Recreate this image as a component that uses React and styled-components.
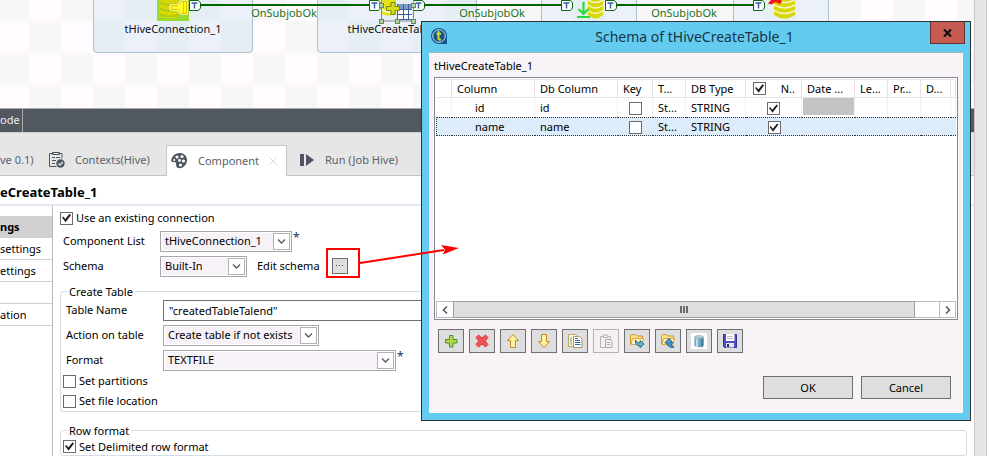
import React from "react";
import styled, { createGlobalStyle, css } from "styled-components";

const Global = createGlobalStyle`
  *, *::before, *::after { box-sizing: border-box; }
  body { margin: 0; overflow: hidden; background: #fff; color: #000; font: 11px/16px "Noto Sans", "Open Sans", sans-serif; }
  button, input, select { font: inherit; color: inherit; margin: 0; padding: 0; }
`;

const Shell = styled.div`
  position: relative;
  display: flex;
  height: 100vh;
`;
const Main = styled.main`
  flex: 1;
  min-width: 0;
  display: flex;
  flex-direction: column;
`;
const Rail = styled.aside`
  flex: 0 0 13px;
  background: #e6e6e6;
  border: solid #c6c6c6;
  border-width: 0 1px;
`;

/* ---------- job canvas ---------- */
const Canvas = styled.section`
  position: relative;
  flex: 0 0 108px;
  overflow: hidden;
  background: conic-gradient(#f6f7f6 25%, #fffbff 0 50%, #f6f7f6 0 75%, #fffbff 0) -3px 21px / 64px 64px;
`;
const Subjob = styled.div`
  position: absolute;
  top: -60px;
  left: ${(p) => p.$x}px;
  width: ${(p) => p.$w}px;
  height: 113px;
  border: 1px solid #a9c0cf;
  border-radius: 4px;
  background: rgba(200, 222, 238, 0.36);
`;
const CanvasLabel = styled.span`
  position: absolute;
  left: ${(p) => p.$x}px;
  top: ${(p) => p.$y}px;
  transform: translateX(-50%);
  white-space: nowrap;
  color: ${(p) => (p.$link ? "#1c711c" : "#111")};
`;
const Wires = styled.svg`
  position: absolute;
  left: 0;
  top: 0;
`;

/* ---------- component view ---------- */
const ViewBar = styled.header`
  flex: 0 0 25px;
  display: flex;
  align-items: stretch;
  border: solid #aaa;
  border-width: 1px 0;
  border-bottom-color: #cfcfcf;
  background: #525860;
  color: #eee;
`;
const ViewName = styled.span`
  width: 23px;
  padding-top: 3px;
  border-right: 1px solid #aaa;
`;
const Tabs = styled.nav`
  flex: 0 0 43px;
  display: flex;
  align-items: flex-end;
  background: #e6e6e6;
`;
const Tab = styled.button`
  height: ${(p) => (p.$active ? 31 : 43)}px;
  width: ${(p) => p.$w}px;
  display: flex;
  align-items: center;
  gap: 10px;
  padding: ${(p) => (p.$active ? "0 4px" : "12px 0 0")};
  border: 0 solid #c4c4c4;
  border-width: ${(p) => (p.$active ? "1px 1px 0" : "0 0 1px")};
  background: ${(p) => (p.$active ? "#fff" : "transparent")};
  color: #5a626e;
  text-align: left;
  white-space: nowrap;
  svg { flex: none; }
`;
const TabFill = styled.div`
  flex: ${(p) => (p.$w ? `0 0 ${p.$w}px` : "1")};
  align-self: stretch;
  border-bottom: 1px solid #c4c4c4;
`;
const Heading = styled.h1`
  flex: 0 0 30px;
  margin: 0;
  padding-top: 6px;
  font-size: 13px;
  line-height: 20px;
  font-weight: 700;
  border-bottom: 2px solid #e5e7f5;
`;
const Split = styled.div`
  flex: 1;
  min-height: 0;
  display: flex;
  overflow: hidden;
`;
const Side = styled.nav`
  flex: 0 0 53px;
  min-width: 0;
  padding-top: 10px;
  border-right: 1px solid #b9b9bb;
`;
const SideItem = styled.button`
  display: block;
  width: 100%;
  height: 22px;
  border: 0;
  border-bottom: 1px solid #cfcdd0;
  text-align: left;
  white-space: nowrap;
  background: ${(p) => (p.$active ? "#d2d0d3" : "#fff")};
  font-weight: ${(p) => (p.$active ? 700 : 400)};
`;
const Form = styled.form`
  flex: 1;
  min-width: 0;
  padding: 0 7px;
`;
const Row = styled.div`
  display: flex;
  align-items: center;
  height: 22px;
  margin-bottom: ${(p) => (p.$last ? 0 : 3)}px;
  padding-left: 3px;
`;
const FieldLabel = styled.label`
  width: 97px;
  white-space: nowrap;
`;
const EditLabel = styled.label`
  padding: 0 12px 0 10px;
  white-space: nowrap;
`;
const Star = styled.span`
  align-self: flex-start;
  margin-left: 1px;
  font-size: 12px;
  line-height: 16px;
  color: #1c3558;
`;
const CheckRow = styled.label`
  display: flex;
  align-items: center;
  gap: 3px;
  width: max-content;
  height: ${(p) => p.$h || 20}px;
`;
const Check = styled.input.attrs({ type: "checkbox" })`
  appearance: none;
  display: inline-grid;
  place-content: center;
  width: 13px;
  height: 13px;
  border: 1px solid #6c6a6d;
  background: #fff;
  vertical-align: middle;
  &:checked::after {
    content: "";
    width: 9px;
    height: 9px;
    background: #222;
    clip-path: polygon(0 45%, 14% 34%, 36% 62%, 84% 4%, 100% 16%, 40% 96%);
  }
`;
const Group = styled.fieldset`
  min-width: 0;
  margin: ${(p) => p.$top}px 0 0;
  padding: 0 0 0 2px;
  border: 1px solid #d3dde6;
  border-radius: 3px;
`;
const Legend = styled.legend`
  margin-left: 4px;
  padding: 0 2px;
  line-height: 15px;
`;
const TextBox = styled.input`
  flex: 1;
  min-width: 0;
  margin-right: 10px;
  height: 21px;
  padding: 0 5px;
  border: 1px solid #707070;
  background: #fff;
`;
const SelectFrame = styled.span`
  display: flex;
  width: ${(p) => p.$w}px;
  height: 21px;
  padding: 1px;
  border: 1px solid #a9a7ad;
  background: #fff;
`;
const Select = styled.select`
  appearance: none;
  flex: 1;
  min-width: 0;
  padding: 0 3px;
  border: 0;
  border-radius: 0;
  background: #f7f2f7;
`;
const SelectArrow = styled.span`
  flex: 0 0 17px;
  display: grid;
  place-content: center;
  border: 1px solid #b4b2b6;
  background: #fff;
`;
const DotsButton = styled.button`
  display: grid;
  place-content: center;
  width: 16px;
  height: 16px;
  border: 1px solid #707070;
  background: #dedede;
`;

/* ---------- schema dialog ---------- */
const Dialog = styled.section`
  position: absolute;
  left: 421px;
  right: 16px;
  top: 21px;
  display: flex;
  flex-direction: column;
  padding: 0 7px 7px;
  border: 1px solid #2c3135;
  background: #64cbf0;
`;
const TitleBar = styled.header`
  display: flex;
  align-items: flex-start;
  height: 30px;
  padding-left: 2px;
`;
const Title = styled.h2`
  flex: 1;
  margin: 0;
  padding: 4px 0 0 12px;
  text-align: center;
  font-size: 14px;
  line-height: 22px;
  font-weight: 400;
  color: #173344;
`;
const CloseButton = styled.button`
  width: 35px;
  height: 22px;
  margin-right: -2px;
  display: grid;
  place-content: center;
  border: 1px solid #663333;
  border-top: 0;
  background: #c75b52;
`;
const Logo = styled.svg`
  margin-top: 6px;
`;
const DialogBody = styled.div`
  padding: 5px 5px 14px;
  border-top: 1px solid #a3b4c0;
  background: #f7f3f7;
`;
const Caption = styled.p`
  margin: 0 0 3px;
`;
const Grid = styled.div`
  display: flex;
  flex-direction: column;
  height: 243px;
  padding: 1px;
  border: 1px solid #828790;
  background: #fff;
`;
const Table = styled.table`
  width: 100%;
  table-layout: fixed;
  border-collapse: separate;
  border-spacing: 0;
`;
const cell = css`
  height: 19px;
  padding: 0 0 0 5px;
  overflow: hidden;
  white-space: nowrap;
  text-align: ${(p) => (p.$center ? "center" : "left")};
  font-weight: 400;
`;
const Th = styled.th`
  ${cell}
  border: solid #e6e1e4;
  border-width: 1px 1px 1px 0;
`;
const Td = styled.td`
  ${cell}
  padding-left: ${(p) => (p.$indent ? 23 : 5)}px;
  padding-right: ${(p) => (p.$center ? 5 : 0)}px;
  border-right: 1px solid #f4f0f4;
  ${(p) => p.$off && "padding: 0 0 2px 1px;"}
`;
const OffCell = styled.div`
  height: 17px;
  background: #c5c3c6;
`;
const Tr = styled.tr`
  ${(p) =>
    p.$selected &&
    css`
      td { background: #dcecfa; border: dotted #333; border-width: 1px 0; }
      td:first-child { border-left-width: 1px; }
    `}
`;
const HeadCheck = styled.label`
  display: flex;
  align-items: center;
  justify-content: space-between;
  padding: 0 6px 0 2px;
`;
const ScrollBar = styled.div`
  display: flex;
  height: 17px;
  margin-top: auto;
  border: 1px solid #bcbabc;
  background: #fff;
`;
const ScrollEnd = styled.button`
  flex: 0 0 16px;
  display: grid;
  place-content: center;
  border: 0 solid #bcbabc;
  border-width: ${(p) => (p.$right ? "0 0 0 1px" : "0")};
  background: #fff;
`;
const Thumb = styled.div`
  flex: 1;
  display: flex;
  align-items: center;
  justify-content: center;
  margin: -1px 24px -1px 0;
  border: 1px solid #9e9ea0;
  background: #dedede;
`;
const Tools = styled.div`
  display: flex;
  gap: 5px;
  padding: 9px 4px 0;
`;
const Tool = styled.button`
  width: 26px;
  height: 24px;
  display: grid;
  place-content: center;
  border: 1px solid ${(p) => (p.disabled ? "#b4b2b5" : "#6f6f71")};
  background: ${(p) => (p.disabled ? "#f4f0f4" : "#dedede")};
`;
const Actions = styled.footer`
  display: flex;
  justify-content: flex-end;
  gap: 8px;
  padding: 23px 7px 0 0;
`;
const Action = styled.button`
  width: 90px;
  height: 23px;
  border: 1px solid #6f6f71;
  background: #dedede;
`;
const Callout = styled.svg`
  position: absolute;
  left: 326px;
  top: 240px;
  pointer-events: none;
`;

const Chevron = () => (
  <svg width="9" height="7" viewBox="0 0 9 7" fill="none" stroke="#5c5c5c" strokeWidth="1.4">
    <path d="M1 1.5 4.5 5 8 1.5" />
  </svg>
);
function Combo({ id, value, width }) {
  return (
    <SelectFrame $w={width}>
      <Select id={id} defaultValue={value}><option>{value}</option></Select>
      <SelectArrow><Chevron /></SelectArrow>
    </SelectFrame>
  );
}

const Badge = ({ x }) => (
  <g transform={`translate(${x} 0)`}>
    <path d="M.5.5h9l2 2.500v5l-2 2.500h-9z" fill="#fff" stroke="#0a680a" />
    <path d="M2.500 3h6M5.500 3v5.500" stroke="#3f5fa5" strokeWidth="1.500" />
  </g>
);
const Discs = ({ x, w }) => (
  <g transform={`translate(${x} 0)`}>
    <path d={`M0 0h${w}v15q-${w / 2} 7-${w} 0z`} fill="#d9d700" />
    <path d={`M0 0q${w / 2} 5 ${w} 0M0 5q${w / 2} 6 ${w} 0M0 10.500q${w / 2} 6 ${w} 0`} fill="none" stroke="#f4f4c8" strokeWidth="1.600" />
  </g>
);

function Diagram() {
  return (
    <Wires width="974" height="108" viewBox="0 0 974 108">
      <path d="M200 5h170M425 5h137M617 5h137" stroke="#006400" strokeWidth="2" />
      <rect x="157" y="0" width="32" height="21" fill="#9ad92e" />
      <path d="M159 0h21v16q-10 5-21 0z" fill="#d9d700" />
      <path d="M159 2q10 6 21 0M159 8q10 6 21 0M159 14q10 5 21 0" fill="none" stroke="#a9c91c" strokeWidth="1.500" />
      <path d="M171 5h6l4-4h6v13h-6l-4-4h-6q-2-2 0-5z" fill="#ffff22" stroke="#fff7a8" strokeWidth="1.500" />
      <path d="M171.500 5.500h6l4-4h5v12h-5l-4-4h-6zM183.500 2v11" fill="none" stroke="#e9c300" />
      <Badge x={189} /><Badge x={369} /><Badge x={413} /><Badge x={561} /><Badge x={605} /><Badge x={753} />

      <path d="M382 0h14v14q-8 3-14 0z" fill="#e4e213" />
      <path d="M382 10q8 4 14 0" stroke="#f7f7c4" strokeWidth="2" fill="none" />
      <rect x="397" y="4" width="15" height="16" fill="#fff" />
      <rect x="397" y="4" width="15" height="5" fill="#7b9bc6" />
      <path d="M397 9.500h15M397 14.500h15M397.500 4v16M403.500 4v16M408.500 4v16M397 19.500h15" stroke="#3b5f9c" />
      <path d="M391 2.500h4v4h4.500v4H395v4h-4v-4h-4.500v-4h4.500z" fill="#d5df17" stroke="#78860c" />
      <rect x="381.500" y="-11" width="32" height="32" fill="none" stroke="#8a8a8a" />
      {[[379, 3], [411, 3], [379, 19], [395, 19], [411, 19]].map(([x, y]) => (
        <rect key={`${x}-${y}`} x={x + 0.5} y={y + 0.5} width="4" height="4" fill="#add89b" stroke="#6f7f6c" />
      ))}

      <Discs x={588} w={15} />
      <path d="M583.500 2v12M578.500 9l5 5 5-5M577 17h13" fill="none" stroke="#2bd93f" strokeWidth="2.200" />
      <Discs x={774} w={21} />
      <path d="m768 3.500 3-3.500h10l1 2-2.500 2-4-2-4 2.500z" fill="#f01414" />
    </Wires>
  );
}

const Folder = ({ up }) => (
  <svg width="16" height="16" viewBox="0 0 16 16">
    <path d="M1.500 2.500 3 1.500h3l1.500 1.500h6v7.500h-12z" fill="#fbe38a" stroke="#c9952c" />
    <path d="M3.500 5.500h11l-1.500 6H2z" fill="#fff2b5" stroke="#d7a63d" />
    {up ? (
      <path d="M9 5.500 13 10h-2.200q0 3 3.200 4-6 1.500-7-4H4.800z" fill="#4d93cc" stroke="#17588f" />
    ) : (
      <path d="M6.500 7v2q.5 4 4.500 3.500v2.500l4-4-4-3.500V10q-3 .5-4.500-3z" fill="#6eb6cf" stroke="#226c92" />
    )}
  </svg>
);
const toolIcons = [
  ["Add", <path d="M6.500 2.500h3.500v4h4V10h-4v4H6.500v-4h-4V6.500h4z" fill="#b9d63c" stroke="#3b9247" />],
  ["Remove", <path d="m2 4.500 2.500-2.500L8 5l3.500-3L14 4.500 11.200 8 14 11.500 11.500 14 8 11l-3.500 3L2 11.500 4.800 8z" fill="#ee5252" stroke="#d73a45" />],
  ["Move up", <path d="m8 1.500 5.500 6h-3v7h-5v-7h-3z" fill="#fff0a0" stroke="#c48a28" strokeLinejoin="round" />],
  ["Move down", <path d="m8 14.500 5.500-6h-3v-7h-5v7h-3z" fill="#fff0a0" stroke="#c48a28" strokeLinejoin="round" />],
  ["Copy", <><path d="M1.500 1.500h7l1 1v11h-8z" fill="#fcf7d9" stroke="#bba55a" /><path d="M3 5h2M3 7h2M3 9h2M3 11h2" stroke="#6f93bd" /><path d="M6.500 3.500h6l2.500 2.500v8.500H6.500z" fill="#fff" stroke="#a29a63" /><path d="M8 7.500h5M8 9.500h5.500M8 11.500h5.500M8 5.500h3" stroke="#3a66a6" /></>],
  ["Paste", <><path d="M5 3.500H2.500v11h10v-11H10M5 4.500h5L9.500 2h-4z" fill="none" stroke="#b6b4b8" /><path d="M7.500 6.500H12l2 2v6H7.500zM9 9.500h3M9 11.500h3.500" fill="#f4f0f4" stroke="#aaa8ac" /></>],
];

const columns = [
  ["", 16], ["Column", 83], ["Db Column", 83], ["Key", 35], ["T...", 33], ["DB Type", 60],
  ["N..", 56], ["Date ...", 53], ["Le...", 33], ["Pr...", 33], ["D...", 30], ["", null],
];
const records = [
  { name: "id", type: "St...", db: "STRING", selected: false },
  { name: "name", type: "St...", db: "STRING", selected: true },
];

function SchemaDialog() {
  return (
    <Dialog role="dialog" aria-labelledby="schema-title">
      <TitleBar>
        <Logo width="16" height="16" viewBox="0 0 16 16">
          <path d="M8 0a8 8 0 1 0 0 16h8V8a8 8 0 0 0-8-8z" fill="#14568f" />
          <circle cx="8" cy="8" r="6.300" fill="none" stroke="#c6e2ef" />
          <path d="M7.500 3v7.500q0 1.500 2.500 1M5.500 5.800H10" fill="none" stroke="#d2d92e" strokeWidth="2" />
        </Logo>
        <Title id="schema-title">Schema of tHiveCreateTable_1</Title>
        <CloseButton aria-label="Close">
          <svg width="9" height="8" viewBox="0 0 9 8" stroke="#111" strokeWidth="2.200">
            <path d="m1 .5 7 7M8 .5l-7 7" />
          </svg>
        </CloseButton>
      </TitleBar>
      <DialogBody>
        <Caption>tHiveCreateTable_1</Caption>
        <Grid>
          <Table>
            <colgroup>{columns.map(([n, w], i) => <col key={i} width={w || undefined} />)}</colgroup>
            <thead>
              <tr>
                {columns.map(([n], i) => (
                  <Th key={i}>{n === "N.." ? <HeadCheck><Check defaultChecked />{n}</HeadCheck> : n}</Th>
                ))}
              </tr>
            </thead>
            <tbody>
              {records.map((r) => (
                <Tr key={r.name} $selected={r.selected}>
                  <Td />
                  <Td $indent>{r.name}</Td>
                  <Td>{r.name}</Td>
                  <Td $center><Check aria-label={`${r.name} key`} /></Td>
                  <Td>{r.type}</Td>
                  <Td>{r.db}</Td>
                  <Td $center><Check defaultChecked aria-label={`${r.name} nullable`} /></Td>
                  <Td $off={!r.selected}>{!r.selected && <OffCell />}</Td>
                  <Td /><Td /><Td /><Td />
                </Tr>
              ))}
            </tbody>
          </Table>
          <ScrollBar>
            <ScrollEnd aria-label="Scroll left">
              <svg width="6" height="8" viewBox="0 0 6 8" fill="none" stroke="#555" strokeWidth="1.500"><path d="M5 .5 1.500 4 5 7.500" /></svg>
            </ScrollEnd>
            <Thumb>
              <svg width="8" height="7" viewBox="0 0 8 7" stroke="#6a6a6c" strokeWidth="2"><path d="M1 0v7M4 0v7M7 0v7" /></svg>
            </Thumb>
            <ScrollEnd $right aria-label="Scroll right">
              <svg width="6" height="8" viewBox="0 0 6 8" fill="none" stroke="#555" strokeWidth="1.500"><path d="M1 .5 4.500 4 1 7.500" /></svg>
            </ScrollEnd>
          </ScrollBar>
        </Grid>
        <Tools>
          {toolIcons.map(([label, art]) => (
            <Tool key={label} aria-label={label} disabled={label === "Paste"}>
              <svg width="16" height="16" viewBox="0 0 16 16">{art}</svg>
            </Tool>
          ))}
          <Tool aria-label="Import"><Folder /></Tool>
          <Tool aria-label="Export"><Folder up /></Tool>
          <Tool aria-label="Database">
            <svg width="16" height="16" viewBox="0 0 16 16">
              <path d="M0 0h16v16H0z" fill="#fff" />
              <path d="M3.500 4v9q4.500 2.500 9 0V4z" fill="#6fa9bf" />
              <path d="M5 5v9l2 .5V5z" fill="#c4dde6" />
              <path d="M10 5v9.500l2.500-1.500V4z" fill="#45809c" />
              <ellipse cx="8" cy="4" rx="4.500" ry="1.500" fill="#b4cfd8" stroke="#7d9da8" strokeWidth=".6" />
            </svg>
          </Tool>
          <Tool aria-label="Save">
            <svg width="16" height="16" viewBox="0 0 16 16">
              <path d="M1.500 1.500h13v13h-12l-1-1z" fill="#4f4fc4" stroke="#32329a" />
              <path d="M4 1h8.500v7H4z" fill="#fff" />
              <path d="M5 3.500h6M5 5.500h6" stroke="#bfbfc6" />
              <path d="M4 10h8v4.500H4z" fill="#e4e4ec" />
              <path d="M5 11h2v3H5z" fill="#28287c" />
            </svg>
          </Tool>
        </Tools>
        <Actions>
          <Action>OK</Action>
          <Action>Cancel</Action>
        </Actions>
      </DialogBody>
    </Dialog>
  );
}

export default function App() {
  return (
    <Shell>
      <Global />
      <Main>
        <Canvas>
          <Subjob $x={93} $w={160} />
          <Subjob $x={317} $w={160} />
          <Subjob $x={541} $w={96} />
          <Subjob $x={733} $w={96} />
          <Diagram />
          <CanvasLabel $link $x={284} $y={5}>OnSubjobOk</CanvasLabel>
          <CanvasLabel $link $x={492} $y={5}>OnSubjobOk</CanvasLabel>
          <CanvasLabel $link $x={684} $y={5}>OnSubjobOk</CanvasLabel>
          <CanvasLabel $x={173} $y={21}>tHiveConnection_1</CanvasLabel>
          <CanvasLabel $x={397} $y={21}>tHiveCreateTable_1</CanvasLabel>
        </Canvas>
        <ViewBar><ViewName>ode</ViewName></ViewBar>
        <Tabs>
          <Tab $w={49}>ve 0.1)</Tab>
          <Tab $w={117}>
            <svg width="16" height="16" viewBox="0 0 16 16" fill="none" stroke="#4d5662">
              <path d="M4.500 1.500h-4v13h7M9.500 1.500h3.500v5M3.500.5h7v2h-7zM3 5.500h3M7 5.500h4M3 8.500h4M3 11.500h3" />
              <circle cx="11.500" cy="11.500" r="4.200" fill="#4d5662" stroke="none" />
              <path d="m9.500 11.500 1.500 1.500 2.800-3" stroke="#e6e6e6" strokeWidth="1.300" />
            </svg>
            Contexts(Hive)
          </Tab>
          <Tab $w={121} $active>
            <svg width="17" height="16" viewBox="0 0 17 16">
              <path d="M9 0C4 0 1 3 0 7.500 1 10 3 9 4.500 9.500 6 10 4 13 6.500 14.800 10 16.500 16 13 16 7 16 3 13 0 9 0z" fill="#4d5662" />
              <g fill="#fff"><circle cx="6" cy="4" r="1.600" /><circle cx="11" cy="3.500" r="1.600" /><circle cx="3.200" cy="7" r="1.100" /><circle cx="12.500" cy="8" r="1.600" /><circle cx="8.500" cy="7.500" r="1.400" /><circle cx="9.500" cy="12" r="1.600" /></g>
            </svg>
            Component
            <svg width="8" height="8" viewBox="0 0 8 8" stroke="#d8d8d8"><path d="m0 0 8 8M8 0 0 8" /></svg>
          </Tab>
          <TabFill $w={13} />
          <Tab $w={110}>
            <svg width="15" height="12" viewBox="0 0 15 12" fill="#4d5662"><path d="M0 0h4v12H0zM6 0l8 6-8 6z" /></svg>
            Run (Job Hive)
          </Tab>
          <TabFill />
        </Tabs>
        <Heading>eCreateTable_1</Heading>
        <Split>
          <Side>
            <SideItem $active>ngs</SideItem>
            <SideItem>settings</SideItem>
            <SideItem>ettings</SideItem>
            <SideItem aria-label="View" />
            <SideItem>ation</SideItem>
          </Side>
          <Form onSubmit={(e) => e.preventDefault()}>
            <CheckRow $h={24}><Check defaultChecked />Use an existing connection</CheckRow>
            <Row>
              <FieldLabel htmlFor="component">Component List</FieldLabel>
              <Combo id="component" value="tHiveConnection_1" width={132} />
              <Star>*</Star>
            </Row>
            <Row>
              <FieldLabel htmlFor="schema">Schema</FieldLabel>
              <Combo id="schema" value="Built-In" width={87} />
              <EditLabel htmlFor="edit">Edit schema</EditLabel>
              <DotsButton id="edit" type="button">
                <svg width="8" height="2" viewBox="0 0 8 2" fill="#2c4a75"><path d="M0 0h1v1H0zM3 0h1v1H3zM6 0h1v1H6z" /></svg>
              </DotsButton>
            </Row>
            <Group $top={7}>
              <Legend>Create Table</Legend>
              <Row>
                <FieldLabel htmlFor="table">Table Name</FieldLabel>
                <TextBox id="table" defaultValue={'"createdTableTalend"'} />
              </Row>
              <Row>
                <FieldLabel htmlFor="action">Action on table</FieldLabel>
                <Combo id="action" value="Create table if not exists" width={156} />
              </Row>
              <Row $last>
                <FieldLabel htmlFor="format">Format</FieldLabel>
                <Combo id="format" value="TEXTFILE" width={233} />
                <Star>*</Star>
              </Row>
              <CheckRow><Check />Set partitions</CheckRow>
              <CheckRow><Check />Set file location</CheckRow>
            </Group>
            <Group $top={11}>
              <Legend>Row format</Legend>
              <CheckRow $h={17}><Check defaultChecked />Set Delimited row format</CheckRow>
            </Group>
          </Form>
        </Split>
      </Main>
      <Rail />
      <SchemaDialog />
      <Callout width="136" height="40" viewBox="0 0 136 40" fill="none">
        <rect x="1" y="9" width="32" height="28" stroke="#f00" strokeWidth="2" />
        <path d="M34 23 118 10" stroke="#f00" strokeWidth="2" />
        <path d="m133 8-18-3 4 4.500-2 5z" fill="#f00" />
      </Callout>
    </Shell>
  );
}
